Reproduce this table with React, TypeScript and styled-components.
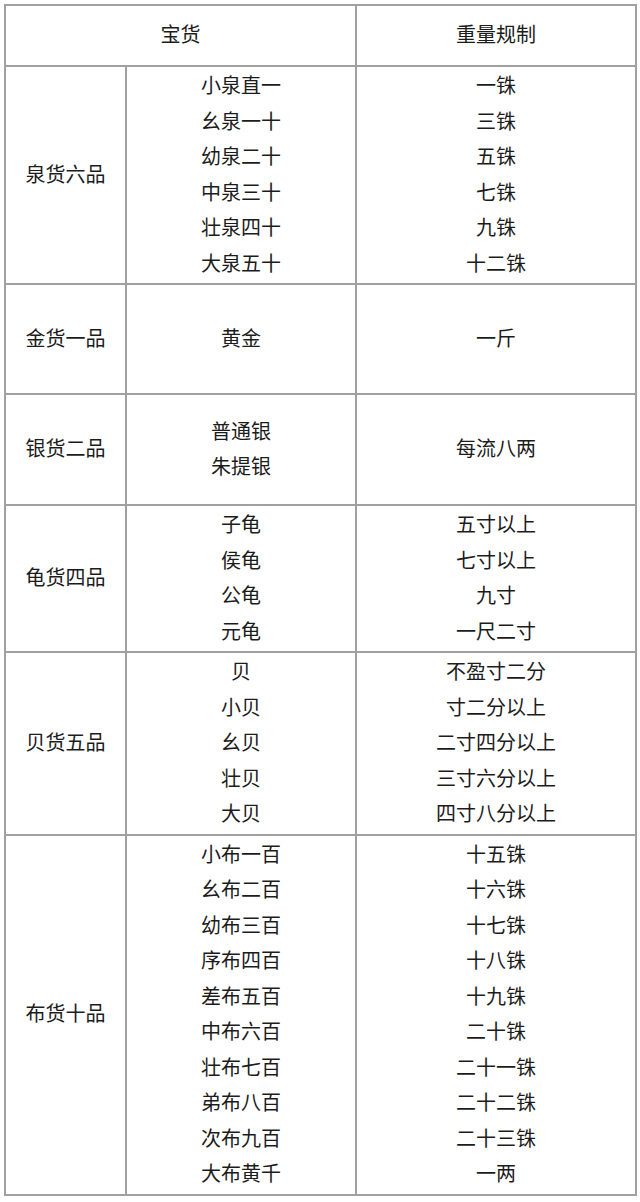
import styled, { createGlobalStyle } from 'styled-components'

const GlobalStyle = createGlobalStyle`
  html, body {
    margin: 0;
    padding: 0;
    background: #ffffff;
  }
`

const Page = styled.div`
  padding: 4px 0 0 4px;
`

const Table = styled.table`
  border-collapse: collapse;
  table-layout: fixed;
  width: 631px;
  font-family: 'Noto Sans CJK SC', 'Noto Sans', sans-serif;
  font-size: 20px;
  color: #1c1c1c;
`

const Cell = styled.td<{ h?: number }>`
  border: 2px solid #a0a0a0;
  text-align: center;
  vertical-align: middle;
  padding: 0 0 3px;
  line-height: 35.5px;
  height: ${({ h }) => (h ? `${h}px` : 'auto')};
  box-sizing: border-box;
`

const HeadCell = styled(Cell).attrs({ as: 'th' })`
  font-weight: normal;
  height: 61px;
`

const Line = styled.div`
  white-space: nowrap;
`

type Group = { name: string; items: [string, string][]; h?: number }

const groups: Group[] = [
  {
    name: '泉货六品',
    items: [
      ['小泉直一', '一铢'],
      ['幺泉一十', '三铢'],
      ['幼泉二十', '五铢'],
      ['中泉三十', '七铢'],
      ['壮泉四十', '九铢'],
      ['大泉五十', '十二铢'],
    ],
  },
  { name: '金货一品', items: [['黄金', '一斤']], h: 110 },
  {
    name: '银货二品',
    items: [
      ['普通银', '每流八两'],
      ['朱提银', ''],
    ],
    h: 111,
  },
  {
    name: '龟货四品',
    items: [
      ['子龟', '五寸以上'],
      ['侯龟', '七寸以上'],
      ['公龟', '九寸'],
      ['元龟', '一尺二寸'],
    ],
  },
  {
    name: '贝货五品',
    items: [
      ['贝', '不盈寸二分'],
      ['小贝', '寸二分以上'],
      ['幺贝', '二寸四分以上'],
      ['壮贝', '三寸六分以上'],
      ['大贝', '四寸八分以上'],
    ],
  },
  {
    name: '布货十品',
    items: [
      ['小布一百', '十五铢'],
      ['幺布二百', '十六铢'],
      ['幼布三百', '十七铢'],
      ['序布四百', '十八铢'],
      ['差布五百', '十九铢'],
      ['中布六百', '二十铢'],
      ['壮布七百', '二十一铢'],
      ['弟布八百', '二十二铢'],
      ['次布九百', '二十三铢'],
      ['大布黄千', '一两'],
    ],
  },
]

export default function App() {
  return (
    <Page>
      <GlobalStyle />
      <Table>
        <colgroup>
          <col style={{ width: 121 }} />
          <col style={{ width: 230 }} />
          <col style={{ width: 280 }} />
        </colgroup>
        <thead>
          <tr>
            <HeadCell colSpan={2}>宝货</HeadCell>
            <HeadCell>重量规制</HeadCell>
          </tr>
        </thead>
        <tbody>
          {groups.map((g) => (
            <tr key={g.name}>
              <Cell h={g.h}>{g.name}</Cell>
              <Cell h={g.h}>
                {g.items.map(([a]) => (
                  <Line key={a}>{a}</Line>
                ))}
              </Cell>
              <Cell h={g.h}>
                {g.items
                  .filter(([, b]) => b)
                  .map(([a, b]) => (
                    <Line key={a}>{b}</Line>
                  ))}
              </Cell>
            </tr>
          ))}
        </tbody>
      </Table>
    </Page>
  )
}
